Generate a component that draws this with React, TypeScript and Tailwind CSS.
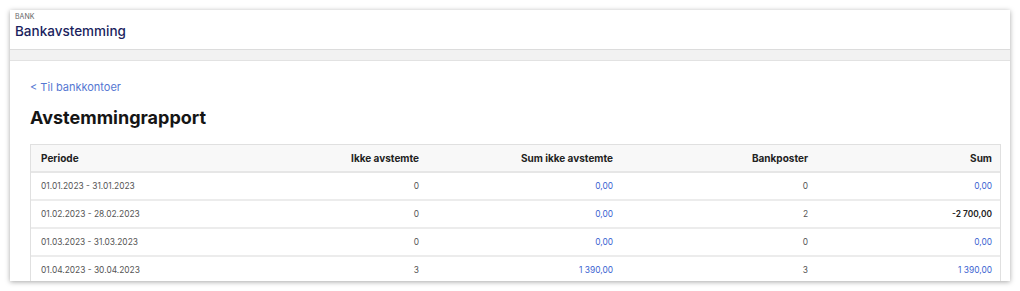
import React from 'react';

type Row = {
  periode: string;
  ikke: number;
  sumIkke: string;
  bankposter: number;
  sum: string;
  sumNegative?: boolean;
};

const rows: Row[] = [
  { periode: '01.01.2023 - 31.01.2023', ikke: 0, sumIkke: '0,00', bankposter: 0, sum: '0,00' },
  { periode: '01.02.2023 - 28.02.2023', ikke: 0, sumIkke: '0,00', bankposter: 2, sum: '-2 700,00', sumNegative: true },
  { periode: '01.03.2023 - 31.03.2023', ikke: 0, sumIkke: '0,00', bankposter: 0, sum: '0,00' },
  { periode: '01.04.2023 - 30.04.2023', ikke: 3, sumIkke: '1 390,00', bankposter: 3, sum: '1 390,00' },
];

const cols = 'grid grid-cols-[195px_203px_194px_195px_184px]';

export default function App() {
  return (
    <div className="bg-white h-[291px] p-[10px] pb-0 font-['Inter',sans-serif]">
      <div className="h-[271px] overflow-hidden bg-white shadow-[0_1px_5px_rgba(0,0,0,0.35)]">
        {/* Page header */}
        <div className="h-[40px] px-[5px] pt-[2px] border-b border-[#dcdcdc]">
          <div className="text-[7px] leading-[9px] text-[#666] uppercase">Bank</div>
          <h1 className="text-[13.5px] leading-[20px] text-[#1b1f5e] font-medium">Bankavstemming</h1>
        </div>
        <div className="h-[11px] bg-[#f2f2f2] border-b border-[#e2e2e2]" />

        {/* Content */}
        <div className="pl-[20px] pr-[9px] pt-[19px]">
          <a className="block text-[11px] leading-[14px] text-[#5577d2]">&lt; Til bankkontoer</a>
          <h2 className="mt-[12px] text-[18px] leading-[24px] font-bold text-[#151515]">Avstemmingrapport</h2>

          <div className="mt-[14px] border border-[#e0e0e0] text-[8.4px]">
            <div className={`${cols} h-[28px] items-center bg-[#f8f8f8] border-b-2 border-[#e6e6e6] font-bold text-[10px] text-[#222]`}>
              <div className="pl-[10px]">Periode</div>
              <div className="text-right pr-[10px]">Ikke avstemte</div>
              <div className="text-right pr-[10px]">Sum ikke avstemte</div>
              <div className="text-right pr-[10px]">Bankposter</div>
              <div className="text-right pr-[10px]">Sum</div>
            </div>
            {rows.map((r) => (
              <div key={r.periode} className={`${cols} h-[28px] items-center border-b-2 border-[#ececec] text-[#555]`}>
                <div className="pl-[10px]">{r.periode}</div>
                <div className="text-right pr-[10px]">{r.ikke}</div>
                <div className="text-right pr-[10px] text-[#3b63d1]">{r.sumIkke}</div>
                <div className="text-right pr-[10px]">{r.bankposter}</div>
                <div className={`text-right pr-[10px] ${r.sumNegative ? 'text-[#222] font-semibold' : 'text-[#3b63d1]'}`}>{r.sum}</div>
              </div>
            ))}
          </div>
        </div>
      </div>
    </div>
  );
}
